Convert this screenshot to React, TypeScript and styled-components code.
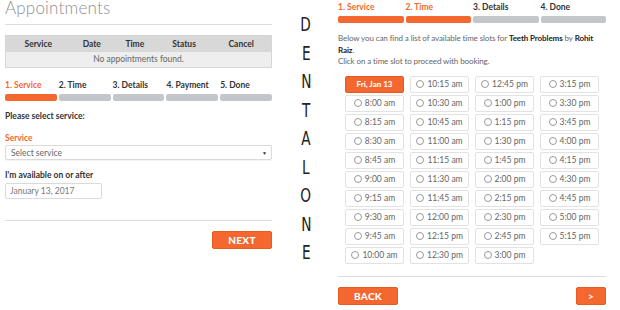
import React from 'react';
import styled, { createGlobalStyle } from 'styled-components';

const GlobalStyle = createGlobalStyle`
  *, *::before, *::after {
    box-sizing: border-box;
  }
  html, body {
    margin: 0;
    padding: 0;
    background: #ffffff;
    font-family: Lato, "Liberation Sans", Arial, sans-serif;
    overflow: hidden;
  }
`;

const ORANGE = '#f4672f';
const BAR_GREY = '#c3c7cb';

const Page = styled.div`
  display: flex;
  flex-direction: row;
  width: 620px;
  height: 310px;
`;

const LeftPanel = styled.section`
  width: 272px;
  padding-left: 5px;
  display: flex;
  flex-direction: column;
`;

const Title = styled.h1`
  margin: -3px 0 0;
  font-size: 17px;
  font-weight: 300;
  color: #8f8f8f;
  line-height: 21px;
  letter-spacing: 0.2px;
`;

const Rule = styled.hr<{ $top: number }>`
  margin: ${(p) => p.$top}px 0 0;
  border: 0;
  border-top: 1px solid #dcdcdc;
  height: 0;
  width: 100%;
`;

const Table = styled.table`
  margin-top: 10px;
  width: 100%;
  border-collapse: collapse;
  border: 1px solid #d6d6d6;
  font-size: 8.5px;
`;

const Th = styled.th`
  background: #d8d8d8;
  color: #333;
  font-weight: 700;
  height: 16px;
  padding: 0;
`;

const Td = styled.td`
  background: #eeeeee;
  color: #666;
  font-weight: 400;
  text-align: center;
  height: 16px;
  padding: 0;
`;

const Steps = styled.div<{ $top: number }>`
  margin-top: ${(p) => p.$top}px;
  display: flex;
  gap: 2px;
`;

const Step = styled.div`
  flex: 1;
  display: flex;
  flex-direction: column;
  gap: 3px;
`;

const StepLabel = styled.span<{ $active: boolean }>`
  font-size: 8.5px;
  font-weight: 700;
  line-height: 11px;
  color: ${(p) => (p.$active ? ORANGE : '#333')};
  white-space: nowrap;
`;

const StepBar = styled.span<{ $active: boolean }>`
  display: block;
  height: 7px;
  border-radius: 2px;
  background: ${(p) => (p.$active ? ORANGE : BAR_GREY)};
`;

const Heading = styled.div`
  margin-top: 10px;
  font-size: 8.5px;
  font-weight: 700;
  color: #333;
`;

const FieldLabel = styled.label<{ $accent?: boolean }>`
  display: block;
  margin-top: ${(p) => (p.$accent ? 12 : 10)}px;
  font-size: 8.5px;
  font-weight: 700;
  color: ${(p) => (p.$accent ? ORANGE : '#333')};
  line-height: 11px;
`;

const SelectBox = styled.div`
  margin-top: 1px;
  height: 15px;
  border: 1px solid #dadada;
  border-radius: 2px;
  box-shadow: 0 1px 1px rgba(0, 0, 0, 0.05);
  display: flex;
  align-items: center;
  justify-content: space-between;
  padding: 0 4px 0 5px;
  font-size: 8.5px;
  color: #666;
`;

const Caret = styled.span`
  font-size: 5px;
  color: #333;
`;

const DateBox = styled.div`
  margin-top: 2px;
  width: 97px;
  height: 16px;
  border: 1px solid #dadada;
  border-radius: 2px;
  display: flex;
  align-items: center;
  padding-left: 4px;
  font-size: 8.5px;
  color: #777;
`;

const ButtonRow = styled.div<{ $split?: boolean }>`
  display: flex;
  justify-content: ${(p) => (p.$split ? 'space-between' : 'flex-end')};
  margin-top: 10px;
`;

const OrangeButton = styled.button<{ $w: number }>`
  width: ${(p) => p.$w}px;
  height: 18px;
  border: 1px solid #e85a22;
  border-radius: 2px;
  background: ${ORANGE};
  color: #fff;
  font-family: Lato, "Liberation Sans", Arial, sans-serif;
  font-size: 10px;
  font-weight: 900;
  padding: 0;
  letter-spacing: 0.3px;
`;

const Brand = styled.div`
  width: 66px;
  display: flex;
  flex-direction: column;
  align-items: center;
  padding-top: 10px;
  padding-left: 2px;
  font-family: "DejaVu Sans", sans-serif;
  font-stretch: condensed;
  font-size: 19px;
  color: #222;
`;

const BrandLetter = styled.span`
  line-height: 28.5px;
  transform: scaleX(0.8);
`;

const RightPanel = styled.section`
  width: 268px;
  display: flex;
  flex-direction: column;
`;

const Intro = styled.p`
  margin: 10px 0 0;
  font-size: 8px;
  line-height: 11.5px;
  letter-spacing: -0.1px;
  color: #666;

  b {
    color: #222;
    font-weight: 700;
  }
`;

const SlotGrid = styled.div`
  margin: 8px 0 0 7px;
  display: grid;
  grid-auto-flow: column;
  grid-template-rows: repeat(10, 17px);
  grid-template-columns: repeat(4, 59px);
  column-gap: 6px;
  row-gap: 2px;
`;

const Slot = styled.div<{ $day?: boolean }>`
  display: flex;
  align-items: center;
  justify-content: center;
  gap: 3px;
  border: 1px solid ${(p) => (p.$day ? '#e85a22' : '#e2e2e2')};
  border-radius: 2px;
  background: ${(p) => (p.$day ? ORANGE : '#fff')};
  color: ${(p) => (p.$day ? '#fff' : '#666')};
  font-size: ${(p) => (p.$day ? 8 : 8.5)}px;
  font-weight: ${(p) => (p.$day ? 900 : 400)};
  white-space: nowrap;
`;

const Radio = styled.span`
  width: 8px;
  height: 8px;
  border: 1px solid #9a9a9a;
  border-radius: 50%;
  background: #fff;
`;

const leftSteps = ['1. Service', '2. Time', '3. Details', '4. Payment', '5. Done'];
const rightSteps = ['1. Service', '2. Time', '3. Details', '4. Done'];

const slots = [
  '8:00 am', '8:15 am', '8:30 am', '8:45 am', '9:00 am', '9:15 am', '9:30 am', '9:45 am', '10:00 am',
  '10:15 am', '10:30 am', '10:45 am', '11:00 am', '11:15 am', '11:30 am', '11:45 am', '12:00 pm', '12:15 pm', '12:30 pm',
  '12:45 pm', '1:00 pm', '1:15 pm', '1:30 pm', '1:45 pm', '2:00 pm', '2:15 pm', '2:30 pm', '2:45 pm', '3:00 pm',
  '3:15 pm', '3:30 pm', '3:45 pm', '4:00 pm', '4:15 pm', '4:30 pm', '4:45 pm', '5:00 pm', '5:15 pm',
];

export default function App() {
  return (
    <>
      <GlobalStyle />
      <Page>
        {/* Appointments / step 1 */}
        <LeftPanel>
          <Title>Appointments</Title>
          <Rule $top={6} />
          <Table>
            <thead>
              <tr>
                <Th>Service</Th>
                <Th>Date</Th>
                <Th>Time</Th>
                <Th>Status</Th>
                <Th>Cancel</Th>
              </tr>
            </thead>
            <tbody>
              <tr>
                <Td colSpan={5}>No appointments found.</Td>
              </tr>
            </tbody>
          </Table>
          <Steps $top={12}>
            {leftSteps.map((s, i) => (
              <Step key={s}>
                <StepLabel $active={i === 0}>{s}</StepLabel>
                <StepBar $active={i === 0} />
              </Step>
            ))}
          </Steps>
          <Heading>Please select service:</Heading>
          <FieldLabel $accent>Service</FieldLabel>
          <SelectBox>
            <span>Select service</span>
            <Caret>▼</Caret>
          </SelectBox>
          <FieldLabel>I'm available on or after</FieldLabel>
          <DateBox>January 13, 2017</DateBox>
          <Rule $top={21} />
          <ButtonRow>
            <OrangeButton $w={60}>NEXT</OrangeButton>
          </ButtonRow>
        </LeftPanel>

        {/* Vertical brand */}
        <Brand>
          {'DENTALONE'.split('').map((c, i) => (
            <BrandLetter key={i}>{c}</BrandLetter>
          ))}
        </Brand>

        {/* Step 2: time slots */}
        <RightPanel>
          <Steps $top={2}>
            {rightSteps.map((s, i) => (
              <Step key={s}>
                <StepLabel $active={i < 2}>{s}</StepLabel>
                <StepBar $active={i < 2} />
              </Step>
            ))}
          </Steps>
          <Intro>
            Below you can find a list of available time slots for <b>Teeth Problems</b> by <b>Rohit Raiz</b>.
            <br />
            Click on a time slot to proceed with booking.
          </Intro>
          <SlotGrid>
            <Slot $day>Fri, Jan 13</Slot>
            {slots.map((t) => (
              <Slot key={t}>
                <Radio />
                {t}
              </Slot>
            ))}
          </SlotGrid>
          <Rule $top={12} />
          <ButtonRow $split>
            <OrangeButton $w={60}>BACK</OrangeButton>
            <OrangeButton $w={30}>&gt;</OrangeButton>
          </ButtonRow>
        </RightPanel>
      </Page>
    </>
  );
}
